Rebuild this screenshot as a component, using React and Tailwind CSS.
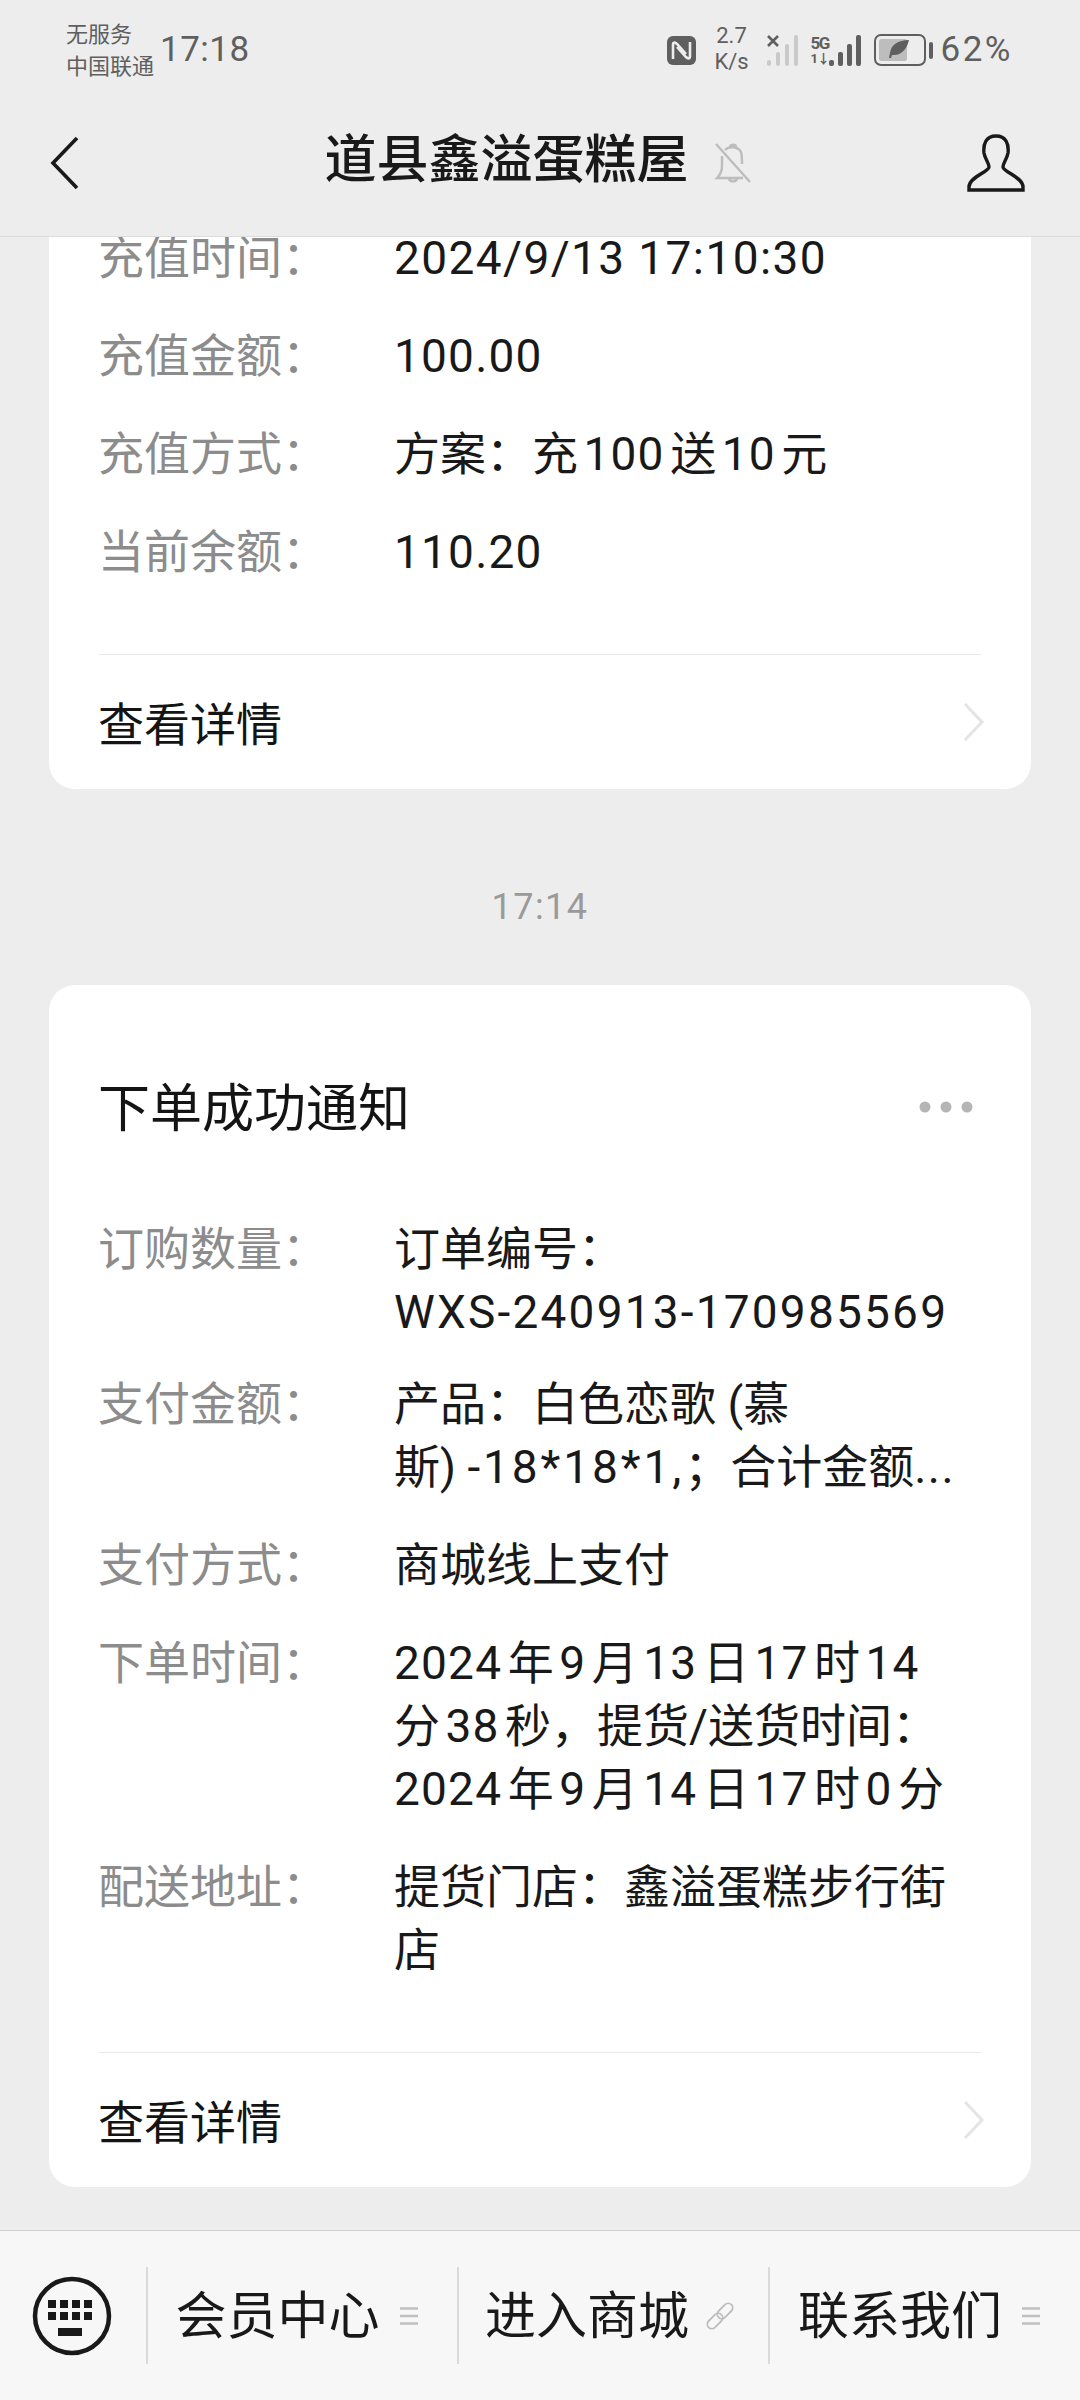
import React from "react";

function N({ children, first }) {
  return (
    <span className={first ? "tracking-[1.2px] mr-[5.5px]" : "tracking-[1.2px] mx-[5.5px]"}>{children}</span>
  );
}

function Row({ label, lines, tight }) {
  return (
    <div className={tight ? "flex ml-[-1px] pt-[3px] mb-[-9px]" : "flex ml-[-1px] pt-[3px] mb-[-3px]"}>
      <div className="w-[296px] shrink-0 text-[#8c8c8c]">{label}</div>
      <div className="flex-1 text-[#191919]">
        {lines.map((l, i) => (
          <div key={i} className="whitespace-nowrap">{l}</div>
        ))}
      </div>
    </div>
  );
}

function Footer() {
  return (
    <div className="mt-[73px]">
      <div className="h-px bg-[#e9e9e9]" />
      <div className="flex h-[134px] items-center justify-between text-[#141414]">
        <span className="mt-[6px] ml-[-1px]">查看详情</span>
        <svg width="22" height="40" viewBox="0 0 22 40" className="mr-[-4px]">
          <path d="M2 2 L19 20 L2 38" fill="none" stroke="#e4e4e4" strokeWidth="3" />
        </svg>
      </div>
    </div>
  );
}

function Signal({ color, dark }) {
  const hs = [6, 14, 22, 31];
  return (
    <div className={dark ? "flex items-end gap-[4px] h-[31px] w-[33px]" : "flex items-end gap-[5px] h-[31px] w-[33px]"}>
      {hs.map((h, i) => (
        <div key={i} className={dark ? "w-[5px] rounded-[2px]" : "w-[4px] rounded-[2px]"} style={{ height: h, background: color }} />
      ))}
    </div>
  );
}

function MenuIcon() {
  return (
    <svg width="18" height="20" viewBox="0 0 18 20" className="shrink-0">
      <path d="M0 2.5H18M0 10H18M0 17.5H18" stroke="#c0c0c0" strokeWidth="2.4" />
    </svg>
  );
}

function LinkIcon() {
  return (
    <svg width="28" height="28" viewBox="0 0 28 28" fill="none" stroke="#bdbdbd" strokeWidth="1.8" className="shrink-0">
      <rect x="10" y="4.5" width="18" height="9" rx="4.5" transform="rotate(-45 19 9)" />
      <rect x="0" y="14.5" width="18" height="9" rx="4.5" transform="rotate(-45 9 19)" />
    </svg>
  );
}

export default function App() {
  return (
    <div
      className="w-[1080px] h-[2400px] flex flex-col bg-[#ededed] overflow-hidden"
      style={{ fontFamily: 'Roboto, "Noto Sans CJK SC", sans-serif' }}
    >
      <header className="h-[237px] shrink-0 border-b border-[#dcdcdc] flex flex-col">
        <div className="h-[100px] flex items-center pl-[66px] pr-[67px] text-[#5f5f5f]">
          <div className="text-[22px] leading-[32px] w-[94px] mt-[2px]">
            <div>无服务</div>
            <div>中国联通</div>
          </div>
          <div className="text-[35px] tracking-[0.5px]">17:18</div>
          <div className="ml-auto flex items-center">
            <svg width="29" height="29" viewBox="0 0 29 29">
              <rect x="0" y="0" width="29" height="29" rx="6" fill="#5f5f5f" />
              <path d="M6 23V9c0-3 2-3 4-1l9 10M23 6v14c0 3-2 3-4 1l-9-10" fill="none" stroke="#ededed" strokeWidth="2.6" />
            </svg>
            <div className="ml-[18px] text-[22px] leading-[26px] text-center w-[36px] mb-[2px]">
              <div>2.7</div>
              <div>K/s</div>
            </div>
            <div className="ml-[17px] relative">
              <Signal color="#c9c9c9" />
              <svg width="12" height="12" viewBox="0 0 12 12" className="absolute left-0 top-0">
                <path d="M1 1L11 11M11 1L1 11" stroke="#5f5f5f" strokeWidth="2.6" />
              </svg>
            </div>
            <div className="ml-[11px] flex flex-col w-[18px] font-bold">
              <span className="text-[17px] leading-[17px] tracking-[-1.5px]">5G</span>
              <span className="text-[13px] leading-[14px] tracking-[-1px]">1↓</span>
            </div>
            <Signal color="#5f5f5f" dark />
            <div className="ml-[12px] flex items-center">
              <div className="w-[52px] h-[32px] rounded-[7px] border-[2.5px] border-[#5f5f5f] p-[3px] flex">
                <div className="w-[28px] bg-[#bdbdbd] rounded-[2px] relative">
                  <svg width="22" height="20" viewBox="0 0 22 20" className="absolute left-[9px] top-[0px]">
                    <path d="M21 1C10 1 3 6 2 14l-1 5 2 0 1-3c9 1 15-6 17-15z" fill="#5f5f5f" />
                  </svg>
                </div>
              </div>
              <div className="ml-[3px] w-[4px] h-[17px] rounded-[2px] bg-[#5f5f5f]" />
            </div>
            <div className="ml-[8px] text-[35px] tracking-[2.5px]">62%</div>
          </div>
        </div>
        <div className="flex-1 relative flex items-center justify-center pb-[15px]">
          <svg width="30" height="54" viewBox="0 0 30 54" fill="none" className="absolute left-[50px] top-[37px]">
            <path d="M27 1 L3 26 L27 51" stroke="#191919" strokeWidth="3.6" />
          </svg>
          <div className="flex items-center">
            <span className="text-[52px] font-medium text-[#191919] leading-none">道县鑫溢蛋糕屋</span>
            <svg width="38" height="42" viewBox="0 0 38 42" fill="none" stroke="#bdbdbd" strokeWidth="2.4" className="ml-[25px] mt-[4px] mr-[4px]">
              <path d="M2 2 L36 40" />
              <path d="M8 14V24c0 5-1 8-5 12h26M11 8c4-4 13-4 16 2 1 3 1 8 1 12M16 5c0-3 6-3 6 0M15 37c1 3 7 3 8 0" />
            </svg>
          </div>
          <svg width="60" height="58" viewBox="0 0 60 58" fill="none" stroke="#191919" strokeWidth="3.4" className="absolute right-[54px] top-[34px]">
            <path d="M30 2c-10 0-13 8-12 17 1 6 5 10 5 14 0 5-20 10-20 20v3h54v-3c0-10-20-15-20-20 0-4 4-8 5-14 1-9-2-17-12-17z" />
          </svg>
        </div>
      </header>

      <main className="flex-1 min-h-0 overflow-hidden flex flex-col justify-end px-[49px] pb-[43px] text-[46px] leading-[63px]">
        <section className="shrink-0 bg-white rounded-[26px] px-[50px] pt-[200px]">
          <div className="flex flex-col gap-[35px]">
            <Row label="充值时间：" lines={[<span className="tracking-[1.4px]">2024/9/13 17:10:30</span>]} />
            <Row label="充值金额：" lines={[<span className="tracking-[1.2px]">100.00</span>]} />
            <Row label="充值方式：" lines={[<>方案：充<N>100</N>送<N>10</N>元</>]} />
            <Row label="当前余额：" lines={[<span className="tracking-[1.2px]">110.20</span>]} />
          </div>
          <Footer />
        </section>

        <div className="shrink-0 h-[196px] pt-[41px] flex items-center justify-center text-[36px] tracking-[1.5px] text-[#9a9a9a]">
          17:14
        </div>

        <section className="shrink-0 bg-white rounded-[26px] px-[50px]">
          <div className="flex items-center justify-between pt-[90px] pb-[70px]">
            <span className="text-[52px] leading-[70px] text-[#141414] ml-[-1px]">下单成功通知</span>
            <svg width="54" height="14" viewBox="0 0 54 14" className="mr-[8px] mb-[6px]" fill="#b5b5b5">
              <circle cx="6" cy="7" r="5.5" />
              <circle cx="27" cy="7" r="5.5" />
              <circle cx="48" cy="7" r="5.5" />
            </svg>
          </div>
          <div className="flex flex-col gap-[35px]">
            <Row tight label="订购数量：" lines={["订单编号：", <span className="tracking-[2.2px]">WXS-240913-170985569</span>]} />
            <Row label="支付金额：" lines={["产品：白色恋歌 (慕", <>斯) <span className="tracking-[2.9px]">-18*18*1,</span>；合计金额<span className="tracking-[1.5px]">...</span></>]} />
            <Row label="支付方式：" lines={["商城线上支付"]} />
            <Row
              label="下单时间："
              lines={[
                <><N first>2024</N>年<N>9</N>月<N>13</N>日<N>17</N>时<N>14</N></>,
                <>分<N>38</N>秒，提货/送货时间：</>,
                <><N first>2024</N>年<N>9</N>月<N>14</N>日<N>17</N>时<N>0</N>分</>,
              ]}
            />
            <Row label="配送地址：" lines={["提货门店：鑫溢蛋糕步行街", "店"]} />
          </div>
          <Footer />
        </section>
      </main>

      <footer className="h-[170px] shrink-0 bg-[#f7f7f7] border-t border-[#d0d0d0] flex items-center text-[51px] text-[#191919]">
        <div className="w-[148px] h-[97px] shrink-0 flex items-center justify-center border-r-2 border-[#dadada]">
          <svg width="82" height="82" viewBox="0 0 82 82" className="ml-[-2px]">
            <circle cx="41" cy="41" r="37" fill="none" stroke="#191919" strokeWidth="4.5" />
            {[17, 29, 41, 53].map((x) => (
              <g key={x} fill="#191919">
                <rect x={x} y="25" width="8" height="8" />
                <rect x={x} y="37" width="8" height="8" />
              </g>
            ))}
            <rect x="27" y="53" width="24" height="8" fill="#191919" />
          </svg>
        </div>
        <div className="w-[311px] h-[97px] shrink-0 flex items-center justify-center gap-[20px] pr-[12px] border-r-2 border-[#dadada]">
          <span className="mt-[4px]">会员中心</span>
          <MenuIcon />
        </div>
        <div className="w-[311px] h-[97px] shrink-0 flex items-center justify-center gap-[17px] pr-[8px] border-r-2 border-[#dadada]">
          <span className="mt-[4px]">进入商城</span>
          <LinkIcon />
        </div>
        <div className="flex-1 h-[97px] flex items-center justify-center gap-[20px] pr-[12px]">
          <span className="mt-[4px]">联系我们</span>
          <MenuIcon />
        </div>
      </footer>
    </div>
  );
}
